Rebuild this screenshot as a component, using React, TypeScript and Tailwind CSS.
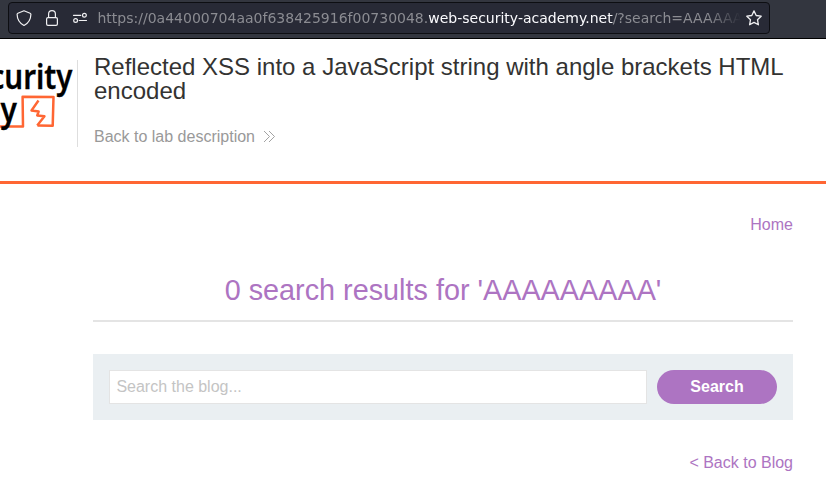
const sans = "font-['Liberation_Sans',Arial,sans-serif]";

function AddressBar() {
  return (
    <header className="h-[39px] border-b border-black bg-[#33363f] pt-[2px] pl-[8px]">
      <div className="flex h-8 w-[762px] items-center rounded-[4px] border border-[#0d0e12] bg-[#282a36] text-[#f0f0f2]">
        <svg className="ml-[7px] shrink-0" width="16" height="16" viewBox="0 0 16 16" fill="none" stroke="currentColor" strokeWidth="1.2" strokeLinejoin="round">
          <path d="M8 .8 14.1 3.2q.8.3.8 1.1c-.1 5-2.2 8.8-6.9 11.2C3.300 13.100 1.200 9.300 1.100 4.300q0-.8.8-1.100Z" />
        </svg>
        <svg className="ml-[12px] shrink-0" width="16" height="16" viewBox="0 0 16 16" fill="none" stroke="currentColor" strokeWidth="1.2">
          <rect x="2.600" y="7.600" width="10.800" height="7.800" rx="1.400" />
          <path d="M4.600 7.600V4a3.400 3.400 0 0 1 6.800 0v3.600" />
        </svg>
        <svg className="ml-[12px] shrink-0" width="16" height="16" viewBox="0 0 16 16" fill="none" stroke="currentColor" strokeWidth="1.200" strokeLinecap="round">
          <circle cx="12.400" cy="5.300" r="1.900" />
          <circle cx="3.600" cy="10.500" r="1.900" />
          <path d="M1.500 5.300h7.300M7.200 10.500h7.300" />
        </svg>
        <div className="ml-[9.5px] w-[643px] overflow-hidden font-['DejaVu_Sans',sans-serif] text-[14px] leading-5 whitespace-nowrap text-[#8b8c92] [mask-image:linear-gradient(to_right,black_610px,transparent_643px)]">
          https://0a44000704aa0f638425916f00730048.
          <span className="text-[#fbfbfe]">web-security-academy.net</span>/?search=AAAAAAAAA
        </div>
        <svg className="ml-[5.5px] shrink-0" width="16" height="16" viewBox="0 0 16 16" fill="none" stroke="currentColor" strokeWidth="1.300" strokeLinejoin="round">
          <path d="m8 .9 2.200 4.600 5 .7-3.700 3.500.9 5.100L8 12.400l-4.400 2.400.9-5.100L.8 6.200l5-.7Z" />
        </svg>
      </div>
    </header>
  );
}

function Logo() {
  return (
    <svg className="shrink-0" width="77" height="88" viewBox="0 60 77 88">
      <path d="M0 126.500h23l-.4-29.700L53.500 97l-.8 28.800-15.200-.3" fill="none" stroke="#ff6633" strokeWidth="2.500" strokeLinejoin="round" />
      <path d="M38.500 100.500 31.500 110.500l7.200 1-1.500 4 7.300.7-7.300 9.300" fill="none" stroke="#ff6633" strokeWidth="2.400" strokeLinejoin="round" />
      <g className="font-['Noto_Sans',sans-serif] text-[35px] font-semibold" fill="#000" stroke="#000" strokeWidth="0.300">
        <text x="-44" y="89" textLength="116.500" lengthAdjust="spacingAndGlyphs">Security</text>
        <text x="-117" y="121.500" textLength="134" lengthAdjust="spacingAndGlyphs">Academy</text>
      </g>
    </svg>
  );
}

export default function App() {
  return (
    <div className={`h-[500px] w-full overflow-hidden bg-white ${sans}`}>
      <AddressBar />
      <section className="flex h-[145px] border-b-[3px] border-[#ff6633] pt-[21px]">
        <Logo />
        <div className="h-[87px] w-px shrink-0 bg-[#dedede]" />
        <div className="-mt-[5px] ml-4 w-[700px]">
          <h2 className="text-[24px] leading-6 text-[#333332]">
            Reflected XSS into a JavaScript string with angle brackets HTML encoded
          </h2>
          <a className="mt-[22px] flex items-center text-[16px] leading-6 text-[#999]">
            Back to lab description
            <svg className="ml-[8px]" width="14" height="14" viewBox="0 0 14 14" fill="none" stroke="#999" strokeWidth="0.900">
              <path d="m1 1 5.500 5.500L1 12M6 1l5.500 5.500L6 12" />
            </svg>
          </a>
        </div>
      </section>
      <main className="ml-[93px] w-[700px] text-[16px] text-[#ad74c2]">
        <nav className="flex justify-end pt-[29px] leading-6">
          <a>Home</a>
        </nav>
        <h1 className="mt-[33px] h-[52px] border-b-2 border-[#e4e4e4] text-center text-[28.800px] leading-[40px]">
          0 search results for 'AAAAAAAAA'
        </h1>
        <form className="mt-8 flex h-[66px] gap-[10px] bg-[#eaeff2] p-4">
          <input
            className="h-[34px] w-[538px] border border-[#e4e4e4] bg-white px-[6.400px] outline-none placeholder:text-[#c4c4c4]"
            placeholder="Search the blog..."
          />
          <button type="button" className="h-[34px] w-[120px] rounded-full bg-[#ad74c2] font-bold text-white">
            Search
          </button>
        </form>
        <div className="mt-[31px] text-right leading-6">
          <a>&lt; Back to Blog</a>
        </div>
      </main>
    </div>
  );
}
